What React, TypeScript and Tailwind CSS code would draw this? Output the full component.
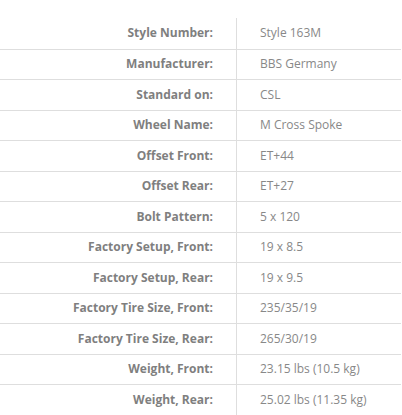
const specs = [
  { label: "Style Number:", value: "Style 163M" },
  { label: "Manufacturer:", value: "BBS Germany" },
  { label: "Standard on:", value: "CSL" },
  { label: "Wheel Name:", value: "M Cross Spoke" },
  { label: "Offset Front:", value: "ET+44" },
  { label: "Offset Rear:", value: "ET+27" },
  { label: "Bolt Pattern:", value: "5 x 120" },
  { label: "Factory Setup, Front:", value: "19 x 8.5" },
  { label: "Factory Setup, Rear:", value: "19 x 9.5" },
  { label: "Factory Tire Size, Front:", value: "235/35/19" },
  { label: "Factory Tire Size, Rear:", value: "265/30/19" },
  { label: "Weight, Front:", value: "23.15 lbs (10.5 kg)" },
  { label: "Weight, Rear:", value: "25.02 lbs (11.35 kg)" },
];

const App = () => {
  return (
    <div className="w-[402px] h-[415px] overflow-hidden bg-white pt-[18px] font-['Open_Sans',sans-serif] text-[12px]">
      <div className="w-[401px]">
        {specs.map((row, i) => (
          <div
            key={row.label}
            className={`flex h-[30.5px] ${i > 0 ? "border-t border-[#dedede]" : ""}`}
          >
            <div className="w-[237px] shrink-0 flex items-center justify-end pr-[23px] border-r border-[#dedede] font-bold text-[#7f7f7f]">
              {row.label}
            </div>
            <div className="flex-1 flex items-center pl-[23px] text-[#888888]">{row.value}</div>
          </div>
        ))}
      </div>
    </div>
  );
};

export default App;
